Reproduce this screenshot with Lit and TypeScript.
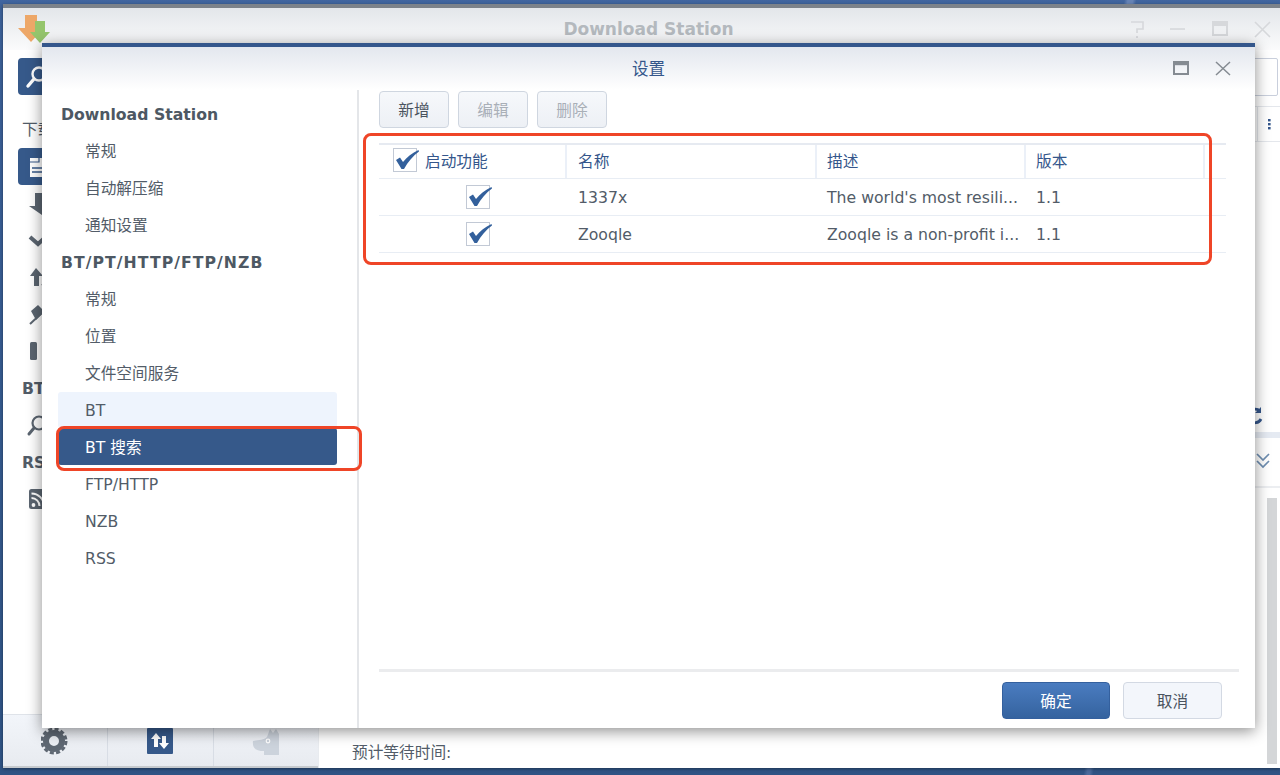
import { LitElement, html, css, svg } from "lit";
import { customElement } from "lit/decorators.js";

const check = svg`<path d="M2 11 L6 8.6 L9 13 C13 8 18 4 24.5 1 L25 2.6 C19 7 14 13 10 20 L7.5 20 Z" fill="#33609c"/>`;

@customElement("app-root")
export class AppRoot extends LitElement {
  static styles = css`
    :host { display: block; position: relative; width: 1280px; height: 775px; overflow: hidden;
      font-family: "DejaVu Sans", "Noto Sans CJK SC", sans-serif; font-size: 15.7px; color: #525c68;
      background: linear-gradient(180deg, #41659f 0, #3c6199 8px, #2f5384 100%); }
    .desk-line { position: absolute; left: 1100px; top: 0; width: 60px; height: 4px; background: linear-gradient(100deg, transparent 40%, #6683b5 46%, #6683b5 54%, transparent 60%); }
    .desk-line.low { left: 1060px; top: 768px; height: 7px; background: linear-gradient(100deg, transparent 40%, #4a6a9c 46%, #4a6a9c 50%, transparent 56%); }
    .win { position: absolute; left: 3px; top: 4px; width: 1277px; height: 764px; display: flex; flex-direction: column; background: #fff; box-shadow: 0 1px 3px rgba(0,0,0,.4); }
    .win-title { height: 46px; flex: none; display: flex; align-items: center; position: relative;
      border-top: 4px solid #7c828a; box-sizing: border-box; background: linear-gradient(180deg, #e3e6ea, #fbfbfc); }
    .win-title .name { position: absolute; left: 0; width: 1291px; top: 11px; text-align: center; font-weight: 700; font-size: 17px; color: #b4b9be; }
    .win-ctl { position: absolute; left: 1120px; top: 6px; width: 157px; height: 30px; }
    .logo { position: absolute; left: 14px; top: 6px; }
    .win-body { flex: 1; display: flex; min-height: 0; }
    .win-side { width: 315px; flex: none; display: flex; flex-direction: column; border-right: 1px solid #e8ebef; }
    .side-list { flex: 1; padding: 8px 0 0 15px; display: flex; flex-direction: column; }
    .si { height: 37px; width: 60px; flex: none; display: flex; align-items: center; color: #525c68; }
    .si.on { background: #36598a; border-radius: 4px; }
    .si.lbl { padding-left: 4px; font-weight: 700; }
    .si.cap { padding: 3px 0 0 4px; margin-top: 10px; height: 43px; box-sizing: border-box; }
    .tabs { height: 54px; flex: none; display: flex; background: linear-gradient(180deg, #f2f5fa, #e8ebf0); border-top: 1px solid #dfe3e9; border-bottom: 2px solid #c6cace; box-sizing: border-box; }
    .tab { flex: 1; display: flex; justify-content: center; align-items: flex-end; padding-bottom: 11px; border-right: 1px solid #d8dde5; }
    .tab:last-child { border-right: 0; }
    .win-main { flex: 1; position: relative; display: flex; flex-direction: column; min-width: 0; }
    .m-top { height: 56px; flex: none; display: flex; justify-content: flex-end; padding: 8px 2px 0 0; box-sizing: border-box; }
    .m-input { width: 60px; height: 36px; border: 1px solid #c9cfdc; border-radius: 2px; background: #fff; }
    .m-bar { height: 36px; flex: none; box-sizing: border-box; border-top: 1px solid #e4e7ec; border-bottom: 1px solid #e4e7ec; display: flex; justify-content: flex-end; margin-left: 900px; }
    .m-more { width: 23px; box-sizing: border-box; border-left: 1px solid #e4e7ec; display: flex; justify-content: center; align-items: center; }
    .m-list { height: 290px; flex: none; display: flex; justify-content: flex-end; align-items: flex-end; padding: 0 16px 7px 0; box-sizing: border-box; border-top: 1px solid transparent; }
    .m-band { height: 6px; flex: none; background: #e5eaf2; }
    .m-chev { height: 50px; flex: none; display: flex; justify-content: flex-end; padding: 14px 9px 0 0; box-sizing: border-box; border-bottom: 2px solid #eceef1; }
    .m-rest { flex: 1; display: flex; justify-content: flex-end; padding: 10px 3px 4px 0; position: relative; min-height: 0; }
    .scroll { width: 10px; background: #d4d6d8; }
    .eta { position: absolute; left: 33px; bottom: 5px; color: #525c68; }

    .dlg { position: absolute; left: 42px; top: 43px; width: 1213px; height: 685px; background: #fff; border-top: 4px solid #34568b; box-sizing: border-box; display: flex; flex-direction: column; box-shadow: 0 3px 14px rgba(0,0,0,.45); }
    .dlg-head { height: 43px; flex: none; position: relative; background: linear-gradient(180deg, #e3e7ee, #ffffff); display: flex; justify-content: center; align-items: center; color: #34568b; font-size: 16.5px; padding-bottom: 2px; box-sizing: border-box; }
    .dlg-ctl { position: absolute; left: 1128px; top: 10px; }
    .dlg-body { flex: 1; display: flex; min-height: 0; }
    .nav { width: 317px; flex: none; box-sizing: border-box; border-right: 2px solid #e4e6e9; padding: 5px 20px 0 16px; display: flex; flex-direction: column; }
    .ni { height: 37px; flex: none; display: flex; align-items: center; padding: 0 0 0 27px; box-sizing: border-box; color: #525c68; border-radius: 3px; }
    .ni.latin { padding: 1px 0 0 27px; }
    .ni.head { padding: 2px 0 0 3px; font-weight: 700; color: #4d5863; }
    .ni.wide { letter-spacing: 1.05px; }
    .ni.hover { background: #eef4fd; margin-top: 1px; height: 36px; padding-top: 1px; }
    .ni.sel { background: #36598a; color: #fff; height: 37px; padding: 0 0 0 27px; }
    .pane { flex: 1; min-width: 0; display: flex; flex-direction: column; padding: 1px 16px 0 20px; }
    .bar { display: flex; gap: 9px; flex: none; height: 37px; }
    .btn { width: 70px; height: 37px; box-sizing: border-box; border: 1px solid #cfd6e0; border-radius: 4px; background: linear-gradient(180deg, #f6f8fb, #edf0f5); display: flex; align-items: center; justify-content: center; color: #4a535e; }
    .btn.off { color: #a9afb7; }
    .table { margin-top: 15px; width: 847px; flex: 1; }
    .tr { display: grid; grid-template-columns: 188px 250px 209px 179px 21px; height: 37px; border-bottom: 1px solid #e8edf4; box-sizing: border-box; align-items: center; }
    .tr.th { height: 36px; border-top: 2px solid #e6eaf1; color: #34568b; }
    .td { height: 100%; display: flex; align-items: center; padding-left: 11px; box-sizing: border-box; white-space: nowrap; overflow: hidden; }
    .td:nth-child(n+3) { padding-left: 10px; }
    .th .td { border-right: 2px solid #ebf0f8; padding-bottom: 3px; }
    .th .td:last-child { border-right: 0; }
    .td.first { padding-left: 14px; gap: 8px; overflow: visible; }
    .td.mid { justify-content: center; padding-left: 9px; overflow: visible; }
    .box { width: 24px; height: 24px; flex: none; border: 1px solid #c2c9d5; box-sizing: border-box; background: #fff; overflow: visible; display: block; }
    .foot { flex: none; height: 59px; border-top: 3px solid #ebecee; display: flex; justify-content: flex-end; padding: 10px 17px 0 0; gap: 13px; box-sizing: border-box; }
    .ok, .no { height: 37px; box-sizing: border-box; border-radius: 4px; display: flex; align-items: center; justify-content: center; }
    .ok { width: 108px; color: #fff; background: linear-gradient(180deg, #4a7cc0, #35639f); border: 1px solid #34609e; }
    .no { width: 99px; background: #f3f6fb; border: 1px solid #d3d9e3; color: #4a535e; }
    .mark { position: absolute; border: 3.5px solid #ef4527; border-radius: 8px; box-sizing: border-box; pointer-events: none; }
    .mark.a { left: 363px; top: 133px; width: 849px; height: 132px; }
    .mark.b { left: 56px; top: 426px; width: 306px; height: 45px; }
  `;

  private boxIcon() {
    return html`<svg class="box" viewBox="0 0 22 22">${check}</svg>`;
  }

  private side() {
    const g = "#5b6570";
    return html`
      <div class="si on"><svg width="40" height="37" viewBox="0 0 40 37"><circle cx="21" cy="16" r="6.5" fill="none" stroke="#fff" stroke-width="2.4"/><path d="M16 21 L10 28" stroke="#fff" stroke-width="3.4" stroke-linecap="round"/></svg></div>
      <div class="si cap">下载</div>
      <div class="si on"><svg width="40" height="37" viewBox="0 0 40 37"><path d="M12 10 H27 V29 H12 Z" fill="#fff"/><path d="M14 20 H27 M14 24 H27" stroke="#36598a" stroke-width="1.4"/><path d="M12 14 H21 V10" fill="none" stroke="#36598a" stroke-width="1.2"/></svg></div>
      <div class="si"><svg width="40" height="37" viewBox="0 0 40 37"><path d="M17 8 H29 V21 L33 21 L24 30 L11 21 H17 Z" fill="${g}"/></svg></div>
      <div class="si"><svg width="40" height="37" viewBox="0 0 40 37"><path d="M12 15 L20 22 L32 11" fill="none" stroke="${g}" stroke-width="4"/></svg></div>
      <div class="si"><svg width="40" height="37" viewBox="0 0 40 37"><path d="M18 9 L25 17 H21 V27 H16 V17 H12 Z" fill="${g}"/><path d="M26 20 V28 M24 25 L26 28 L28 25" stroke="${g}" stroke-width="1.6" fill="none"/></svg></div>
      <div class="si"><svg width="40" height="37" viewBox="0 0 40 37"><path d="M20 9 L28 17 L24 18 L18 24 L13 15 Z" fill="${g}"/><path d="M12 28 L26 15" stroke="${g}" stroke-width="2"/></svg></div>
      <div class="si"><svg width="40" height="37" viewBox="0 0 40 37"><rect x="12" y="9" width="7" height="18" rx="1.5" fill="${g}"/></svg></div>
      <div class="si lbl">BT</div>
      <div class="si"><svg width="40" height="37" viewBox="0 0 40 37"><circle cx="21" cy="16" r="6.5" fill="none" stroke="${g}" stroke-width="2.2"/><path d="M16 21 L11 27" stroke="${g}" stroke-width="3" stroke-linecap="round"/></svg></div>
      <div class="si lbl">RSS</div>
      <div class="si"><svg width="40" height="37" viewBox="0 0 40 37"><rect x="11" y="8" width="20" height="20" rx="2.5" fill="${g}"/><circle cx="15.5" cy="24" r="1.9" fill="#fff"/><path d="M13.5 17 a8 8 0 0 1 8 8 M13.5 12.5 a12.5 12.5 0 0 1 12.5 12.5" fill="none" stroke="#fff" stroke-width="2"/></svg></div>
    `;
  }

  render() {
    return html`
      <div class="desk-line"></div>
      <div class="desk-line low"></div>
      <div class="win">
        <div class="win-title">
          <svg class="logo" width="38" height="34" viewBox="0 0 38 34">
            <path d="M8 1 H20 V14 H27 L14 28 L1 14 H8 Z" fill="#eda768"/>
            <path d="M18 7 H28 V18 H33 L23 29 L13 18 H18 Z" fill="#95c56c"/>
          </svg>
          <div class="name">Download Station</div>
          <svg class="win-ctl" viewBox="0 0 157 30" fill="none" stroke="#d6d8db" stroke-width="1.6">
            <path d="M8 8 H20 V15 H14 V19 M14 22 V24"/>
            <path d="M47 15 H62"/>
            <rect x="90" y="8" width="14" height="13" stroke-width="2"/><path d="M89 10.5 H105" stroke-width="3"/>
            <path d="M132 8 L147 23 M147 8 L132 23"/>
          </svg>
        </div>
        <div class="win-body">
          <div class="win-side">
            <div class="side-list">${this.side()}</div>
            <div class="tabs">
              <div class="tab"><svg width="28" height="28" viewBox="0 0 28 28"><circle cx="13" cy="14" r="8" fill="none" stroke="#5f6873" stroke-width="6"/><circle cx="13" cy="14" r="12" fill="none" stroke="#5f6873" stroke-width="3" stroke-dasharray="4 2.3"/></svg></div>
              <div class="tab"><svg width="26" height="30" viewBox="0 0 26 30"><rect y="3" width="26" height="26" rx="1" fill="#36598a"/><path d="M9 8 L14 14 H11 V22 H7 V14 H4 Z M17 24 L12 18 H15 V11 H19 V18 H22 Z" fill="#fff"/></svg></div>
              <div class="tab"><svg width="28" height="30" viewBox="0 0 28 30"><path d="M1 16 C6 15 12 15 15 12 L18 4 L21 8 L24 4 L27 9 V30 H12 V26 C5 26 0 24 1 16 Z" fill="#ccd3dc"/><circle cx="16" cy="16" r="1.8" fill="none" stroke="#fff" stroke-width="1.2"/></svg></div>
            </div>
          </div>
          <div class="win-main">
            <div class="m-top"><div class="m-input"></div></div>
            <div class="m-bar"><div class="m-more"><svg width="4" height="12" viewBox="0 0 4 12"><rect x="1" y="1" width="2.6" height="2.4" fill="#34568b"/><rect x="1" y="5" width="2.6" height="2.4" fill="#34568b"/><rect x="1" y="9" width="2.6" height="2.4" fill="#34568b"/></svg></div></div>
            <div class="m-list"><svg width="18" height="18" viewBox="0 0 18 18" fill="none" stroke="#34568b" stroke-width="2.8"><path d="M3 6 A7 7 0 0 1 14 4 M15 12 A7 7 0 0 1 4 14"/><path d="M15 0 V6 H9 Z M3 18 V12 H9 Z" fill="#34568b" stroke="none"/></svg></div>
            <div class="m-band"></div>
            <div class="m-chev"><svg width="16" height="18" viewBox="0 0 16 18" fill="none" stroke="#6d8db0" stroke-width="1.7"><path d="M2 2 L8 8 L14 2 M2 9 L8 15 L14 9"/></svg></div>
            <div class="m-rest"><div class="scroll"></div><div class="eta">预计等待时间:</div></div>
          </div>
        </div>
      </div>
      <div class="dlg">
        <div class="dlg-head">设置
          <svg class="dlg-ctl" width="70" height="24" viewBox="0 0 70 24" fill="none" stroke="#858b92">
            <rect x="4" y="5" width="14" height="12" stroke-width="2"/><path d="M3 6.5 H19" stroke-width="3.4"/>
            <path d="M46 5 L60 18 M60 5 L46 18" stroke-width="1.5"/>
          </svg>
        </div>
        <div class="dlg-body">
          <div class="nav">
            <div class="ni head">Download Station</div>
            <div class="ni">常规</div>
            <div class="ni">自动解压缩</div>
            <div class="ni">通知设置</div>
            <div class="ni head wide">BT/PT/HTTP/FTP/NZB</div>
            <div class="ni">常规</div>
            <div class="ni">位置</div>
            <div class="ni">文件空间服务</div>
            <div class="ni hover">BT</div>
            <div class="ni sel">BT 搜索</div>
            <div class="ni latin">FTP/HTTP</div>
            <div class="ni latin">NZB</div>
            <div class="ni latin">RSS</div>
          </div>
          <div class="pane">
            <div class="bar">
              <div class="btn">新增</div>
              <div class="btn off">编辑</div>
              <div class="btn off">删除</div>
            </div>
            <div class="table">
              <div class="tr th">
                <div class="td first">${this.boxIcon()}<span>启动功能</span></div>
                <div class="td">名称</div><div class="td">描述</div><div class="td">版本</div><div class="td"></div>
              </div>
              <div class="tr">
                <div class="td mid">${this.boxIcon()}</div>
                <div class="td">1337x</div><div class="td">The world's most resili...</div><div class="td">1.1</div><div class="td"></div>
              </div>
              <div class="tr">
                <div class="td mid">${this.boxIcon()}</div>
                <div class="td">Zooqle</div><div class="td">Zooqle is a non-profit i...</div><div class="td">1.1</div><div class="td"></div>
              </div>
            </div>
            <div class="foot">
              <div class="ok">确定</div>
              <div class="no">取消</div>
            </div>
          </div>
        </div>
      </div>
      <div class="mark a"></div>
      <div class="mark b"></div>
    `;
  }
}
